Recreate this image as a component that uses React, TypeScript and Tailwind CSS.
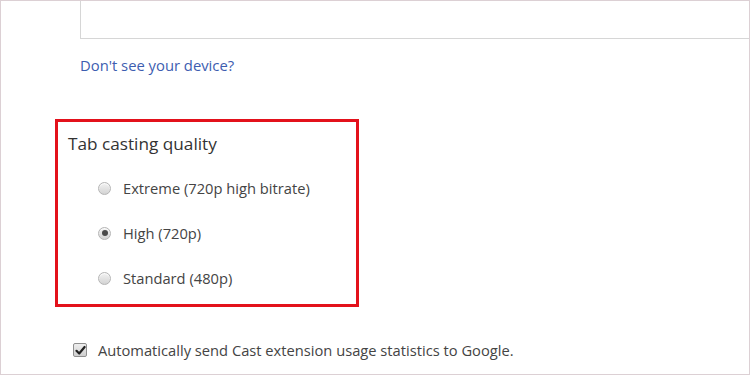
import React from "react";

function Radio({ checked, label }: { checked?: boolean; label: string }) {
  return (
    <div className="flex items-center h-[20px]">
      <div className="w-[13px] h-[13px] rounded-full border border-[#b5b5b5] bg-gradient-to-b from-[#f2f2f2] to-[#d4d4d4] flex items-center justify-center shadow-[inset_0_1px_1px_rgba(255,255,255,0.8)]">
        {checked && <div className="w-[6px] h-[6px] rounded-full bg-[#4a4a4a]" />}
      </div>
      <span className="ml-[12px] text-[14.7px] text-[#444]">{label}</span>
    </div>
  );
}

export default function App() {
  return (
    <div
      className="w-[750px] h-[375px] border border-[#dcd0d4] bg-white overflow-hidden flex flex-col"
      style={{ fontFamily: '"Open Sans", "Noto Sans", sans-serif' }}
    >
      <div className="ml-[79px] h-[38px] border-l border-b border-[#d6d6d6]" />
      <div className="ml-[79px] mt-[16px] text-[14.8px] text-[#3d5db0] leading-[20px]">
        Don't see your device?
      </div>
      <div className="ml-[54px] mt-[44px] w-[304px] h-[188px] border-[3px] border-[#e3111b] flex flex-col">
        <div className="ml-[10px] mt-[9px] text-[17.2px] text-[#333] leading-[26px]">
          Tab casting quality
        </div>
        <div className="ml-[40px] mt-[21px] flex flex-col gap-[25px]">
          <Radio label="Extreme (720p high bitrate)" />
          <Radio checked label="High (720p)" />
          <Radio label="Standard (480p)" />
        </div>
      </div>
      <div className="ml-[72px] mt-[33px] flex items-center h-[20px]">
        <div className="w-[14px] h-[14px] rounded-[2px] border border-[#8f8f8f] bg-gradient-to-b from-[#eeeeee] to-[#cfcfcf] flex items-center justify-center">
          <svg width="11" height="11" viewBox="0 0 11 11">
            <path d="M1.5 5.8 L4.2 8.5 L9.6 2" stroke="#222" strokeWidth="2.2" fill="none" strokeLinecap="round" strokeLinejoin="round" />
          </svg>
        </div>
        <span className="ml-[11px] text-[14.7px] text-[#444]">
          Automatically send Cast extension usage statistics to Google.
        </span>
      </div>
    </div>
  );
}
